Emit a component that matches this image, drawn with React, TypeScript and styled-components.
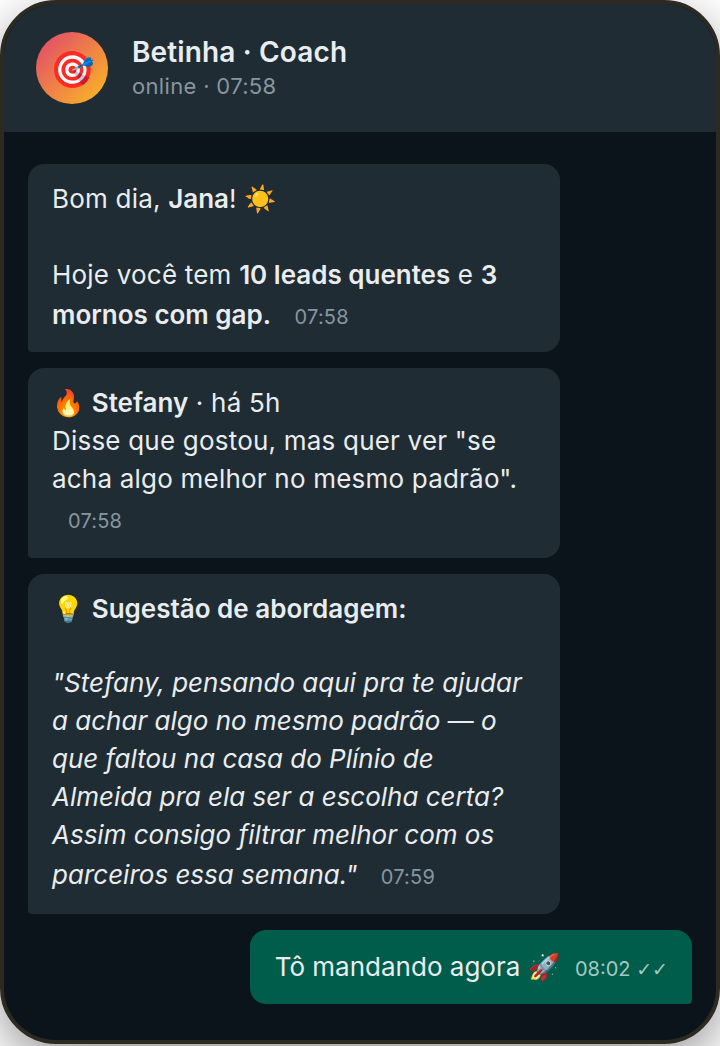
import styled, { createGlobalStyle } from "styled-components";

const GlobalStyle = createGlobalStyle`
  html, body {
    margin: 0;
    padding: 0;
    height: 100%;
    overflow: hidden;
    background: #ffffff;
  }
  * {
    box-sizing: border-box;
  }
`;

/* the mock is laid out at 360px wide and shown at double size */
const Page = styled.div`
  width: 360px;
  height: 523px;
  transform: scale(2);
  transform-origin: 0 0;
  font-family: Inter, "Noto Sans", sans-serif;
`;

const Phone = styled.div`
  display: flex;
  flex-direction: column;
  width: 360px;
  height: 521.5px;
  overflow: hidden;
  background: #0b141a;
  border: 2px solid #2d2a22;
  border-radius: 28px;
  box-shadow: 0 8px 24px rgba(0, 0, 0, 0.4);
`;

const Header = styled.header`
  display: flex;
  align-items: center;
  flex: 0 0 64px;
  gap: 12px;
  padding: 0 16px;
  background: #202c33;
`;

const Avatar = styled.div`
  display: flex;
  align-items: center;
  justify-content: center;
  width: 36px;
  height: 36px;
  border-radius: 50%;
  background: linear-gradient(135deg, #e1446f, #fbbd1f);
  font-size: 18px;
`;

const HeaderText = styled.div`
  display: flex;
  flex-direction: column;
  gap: 2px;
  padding-bottom: 1px;
`;

const Name = styled.div`
  font-size: 14px;
  font-weight: 600;
  line-height: 17px;
  letter-spacing: 0.005em;
  color: #e9edef;
`;

const Status = styled.div`
  font-size: 11px;
  line-height: 14px;
  letter-spacing: 0.015em;
  color: #8696a0;
`;

const Messages = styled.main`
  display: flex;
  flex-direction: column;
  flex: 1;
  gap: 8px;
  padding: 16px 12px;
`;

const Bubble = styled.div<{ $out?: boolean }>`
  align-self: ${(p) => (p.$out ? "flex-end" : "flex-start")};
  width: ${(p) => (p.$out ? "auto" : "266px")};
  padding: 8px 12px 10px;
  border-radius: ${(p) => (p.$out ? "8px 8px 2px 8px" : "8px 8px 8px 2px")};
  background: ${(p) => (p.$out ? "#005c4b" : "#202c33")};
  font-size: 13px;
  line-height: 1.45;
  letter-spacing: ${(p) => (p.$out ? "0" : "0.008em")};
  color: #e9edef;

  strong {
    font-weight: 600;
    letter-spacing: 0;
  }
`;

const Time = styled.span<{ $out?: boolean }>`
  display: inline-block;
  margin: 4px 0 0 ${(p) => (p.$out ? "4px" : "8px")};
  font-size: 10px;
  color: ${(p) => (p.$out ? "#a3c9c0" : "#8696a0")};
`;

const Ticks = styled.span`
  font-family: "DejaVu Sans", sans-serif;
  font-size: 9.5px;
`;

const Suggestion = styled.em`
  font-style: italic;
  letter-spacing: 0;
`;

export default function App() {
  return (
    <Page>
      <GlobalStyle />
      <Phone>
        <Header>
          <Avatar>🎯</Avatar>
          <HeaderText>
            <Name>Betinha · Coach</Name>
            <Status>online · 07:58</Status>
          </HeaderText>
        </Header>
        <Messages>
          <Bubble>
            Bom dia, <strong>Jana</strong>! ☀️
            <br />
            <br />
            Hoje você tem <strong>10 leads quentes</strong> e <strong>3 mornos com gap.</strong>{" "}
            <Time>07:58</Time>
          </Bubble>
          <Bubble>
            🔥 <strong>Stefany</strong> · há 5h
            <br />
            Disse que gostou, mas quer ver "se acha algo melhor no mesmo padrão".{" "}
            <Time>07:58</Time>
          </Bubble>
          <Bubble>
            💡 <strong>Sugestão de abordagem:</strong>
            <br />
            <br />
            <Suggestion>
              "Stefany, pensando aqui pra te ajudar a achar algo no mesmo padrão — o que faltou na
              casa do Plínio de Almeida pra ela ser a escolha certa? Assim consigo filtrar melhor
              com os parceiros essa semana."
            </Suggestion>{" "}
            <Time>07:59</Time>
          </Bubble>
          <Bubble $out>
            Tô mandando agora 🚀{" "}
            <Time $out>
              08:02 <Ticks>✓✓</Ticks>
            </Time>
          </Bubble>
        </Messages>
      </Phone>
    </Page>
  );
}
